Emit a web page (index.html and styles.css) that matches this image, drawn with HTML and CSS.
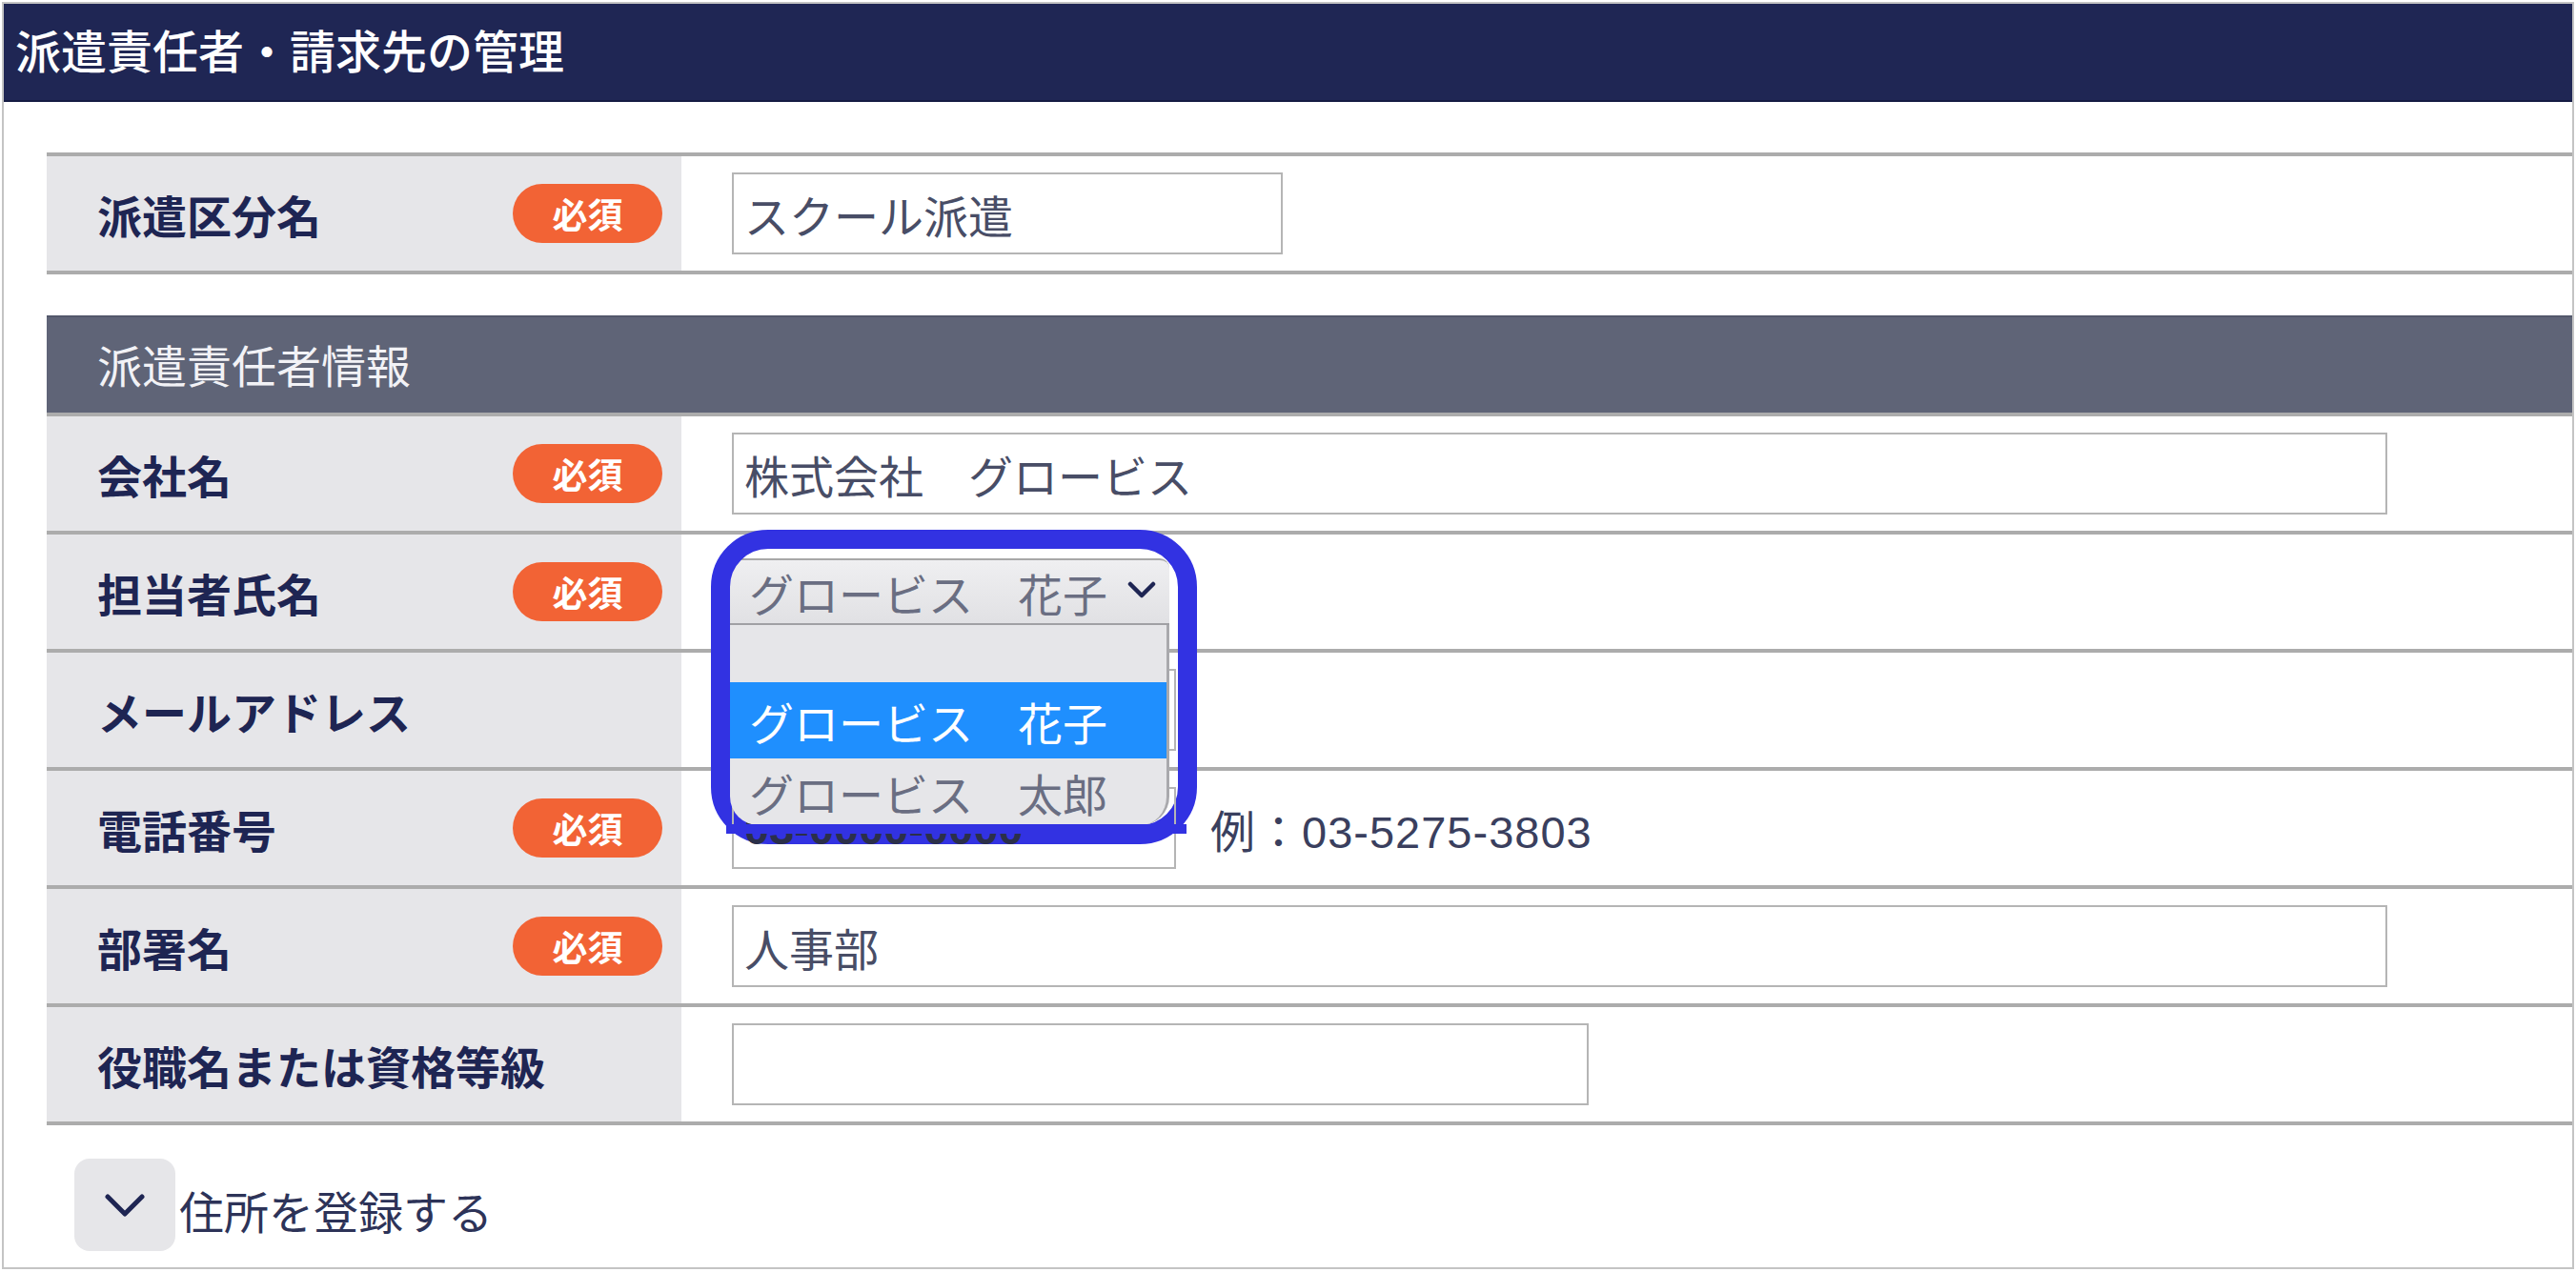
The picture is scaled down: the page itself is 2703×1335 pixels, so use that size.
FILE: index.html
```html
<!DOCTYPE html>
<html lang="ja">
<head>
    <meta charset="UTF-8">
    <meta name="viewport" content="width=device-width, initial-scale=1.0">
    <title>派遣責任者・請求先の管理</title>
    <link rel="stylesheet" href="styles.css">
</head>
<body>
    <div class="panel">
        <h1 class="panel-title">派遣責任者・請求先の管理</h1>
        <div class="panel-body">
            <div class="form-row first">
                <div class="form-label">派遣区分名<span class="required">必須</span></div>
                <div class="form-value"><input class="text-input w-short" type="text" value="スクール派遣"></div>
            </div>

            <div class="section-head">派遣責任者情報</div>

            <div class="form-row">
                <div class="form-label">会社名<span class="required">必須</span></div>
                <div class="form-value"><input class="text-input w-long" type="text" value="株式会社　グロービス"></div>
            </div>
            <div class="form-row">
                <div class="form-label">担当者氏名<span class="required">必須</span></div>
                <div class="form-value">
                    <div class="select-wrap">
                        <div class="select-box">
                            <span>グロービス　花子</span>
                            <svg class="select-arrow" width="30" height="18" viewBox="0 0 30 18"><polyline points="3,3 15,15 27,3" fill="none" stroke="#1e2553" stroke-width="4.5" stroke-linecap="round" stroke-linejoin="round"/></svg>
                        </div>
                        <ul class="select-list">
                            <li class="option"></li>
                            <li class="option selected">グロービス　花子</li>
                            <li class="option">グロービス　太郎</li>
                        </ul>
                        <div class="highlight-mark"></div>
                        <div class="highlight-bar"></div>
                    </div>
                </div>
            </div>
            <div class="form-row">
                <div class="form-label">メールアドレス</div>
                <div class="form-value"><input class="text-input w-tel" type="text" value=""></div>
            </div>
            <div class="form-row">
                <div class="form-label">電話番号<span class="required">必須</span></div>
                <div class="form-value">
                    <input class="text-input w-tel tel" type="text" value="03-0000-0000">
                    <span class="hint">例：03-5275-3803</span>
                </div>
            </div>
            <div class="form-row">
                <div class="form-label">部署名<span class="required">必須</span></div>
                <div class="form-value"><input class="text-input w-long" type="text" value="人事部"></div>
            </div>
            <div class="form-row">
                <div class="form-label">役職名または資格等級</div>
                <div class="form-value"><input class="text-input w-mid" type="text" value=""></div>
            </div>

            <div class="address-toggle">
                <span class="toggle-btn">
                    <svg width="44" height="26" viewBox="0 0 44 26"><polyline points="4,4 22,22 40,4" fill="none" stroke="#1e2553" stroke-width="5" stroke-linecap="round" stroke-linejoin="round"/></svg>
                </span>
                <span class="toggle-text">住所を登録する</span>
            </div>
        </div>
    </div>
</body>
</html>
```

FILE: styles.css
```css
* {
    box-sizing: border-box;
}

body {
    margin: 0;
    padding: 0;
    background: #fff;
    font-family: "Noto Sans CJK JP", "Noto Sans", sans-serif;
    color: #1e2553;
}

.panel {
    margin: 2px;
    border: 2px solid #c4c4c4;
    background: #fff;
}

.panel-title {
    margin: 0;
    height: 103px;
    display: flex;
    align-items: center;
    padding: 0 0 8px 12px;
    background: #1f2654;
    border-bottom: 2px solid #151b43;
    color: #fff;
    font-size: 48px;
    font-weight: 500;
}

.panel-body {
    padding: 53px 0 17px 45px;
}

.form-row {
    display: grid;
    grid-template-columns: 666px 1fr;
    height: 124px;
    border-bottom: 4px solid #acacac;
}

.form-row.first {
    height: 128px;
    border-top: 4px solid #acacac;
    margin-bottom: 43px;
}

.form-label {
    display: flex;
    align-items: center;
    justify-content: space-between;
    padding: 0 20px 0 53px;
    background: #e6e6e9;
    font-size: 47px;
    font-weight: 700;
    color: #1e2553;
}

.required {
    display: inline-flex;
    align-items: center;
    justify-content: center;
    width: 157px;
    height: 62px;
    border-radius: 31px;
    background: #f26335;
    color: #fff;
    font-size: 37px;
    font-weight: 700;
}

.form-value {
    display: flex;
    align-items: center;
    padding-left: 53px;
}

.text-input {
    height: 86px;
    padding: 0 11px;
    border: 2px solid #b5b5b5;
    border-radius: 0;
    background: #fff;
    font-family: "Noto Sans CJK JP", sans-serif;
    font-size: 47px;
    color: #484d66;
    outline: none;
}

.w-short { width: 578px; }
.w-long { width: 1737px; }
.w-mid { width: 899px; }
.w-tel { width: 466px; }

/* 電話番号欄は注釈の枠の上に少しはみ出して見えている */
.tel {
    position: relative;
    z-index: 4;
    background: transparent;
    font-family: "Liberation Sans", "Noto Sans CJK JP", sans-serif;
    font-weight: 700;
    color: #2b2f4a;
}

.hint {
    margin-left: 36px;
    font-family: "Liberation Sans", "Noto Sans CJK JP", sans-serif;
    font-size: 47px;
    letter-spacing: 1px;
    color: #3a3f5e;
}

.section-head {
    display: flex;
    align-items: center;
    height: 106px;
    padding: 0 0 4px 53px;
    background: #5f6477;
    border-top: 2px solid #53586b;
    border-bottom: 4px solid #acacac;
    color: #f2f2f6;
    font-size: 47px;
}

/* 担当者氏名のプルダウン */
.select-wrap {
    position: relative;
    width: 461px;
    margin-left: -2px;
}

.select-box {
    display: flex;
    align-items: center;
    justify-content: space-between;
    height: 70px;
    padding: 0 14px 0 20px;
    background: linear-gradient(#efeff1, #e1e1e4);
    border-top: 2px solid #a8a8a8;
    border-bottom: 2px solid #a0a0a4;
    border-radius: 10px 10px 0 0;
    font-size: 47px;
    color: #6a6e82;
}

.select-arrow {
    display: block;
    margin-top: -4px;
}

.select-list {
    position: absolute;
    top: 70px;
    left: 0;
    width: 461px;
    margin: 0;
    padding: 0;
    list-style: none;
    background: #e6e6e9;
    border-right: 3px solid #a9a9ad;
    border-radius: 0 0 30px 30px;
    overflow: hidden;
    z-index: 5;
}

.option {
    display: flex;
    align-items: center;
    height: 60px;
    padding-left: 20px;
    font-size: 47px;
    color: #6a6e82;
}

.option.selected {
    height: 80px;
    background: #1f8ffe;
    color: #fff;
}

.option:last-child {
    height: 70px;
}

.highlight-mark {
    position: absolute;
    top: -30px;
    left: -20px;
    width: 510px;
    height: 330px;
    border: 20px solid #3232e2;
    border-radius: 60px;
    z-index: 3;
}

.highlight-bar {
    position: absolute;
    left: -4px;
    top: 279px;
    width: 483px;
    height: 10px;
    background: #3232e2;
    z-index: 6;
}

.address-toggle {
    display: flex;
    align-items: center;
    margin: 35px 0 0 29px;
}

.toggle-btn {
    display: flex;
    align-items: center;
    justify-content: center;
    width: 106px;
    height: 97px;
    border-radius: 16px;
    background: #e6e6e9;
}

.toggle-text {
    margin-left: 4px;
    padding-top: 10px;
    font-size: 47px;
    color: #2d3358;
}
```
